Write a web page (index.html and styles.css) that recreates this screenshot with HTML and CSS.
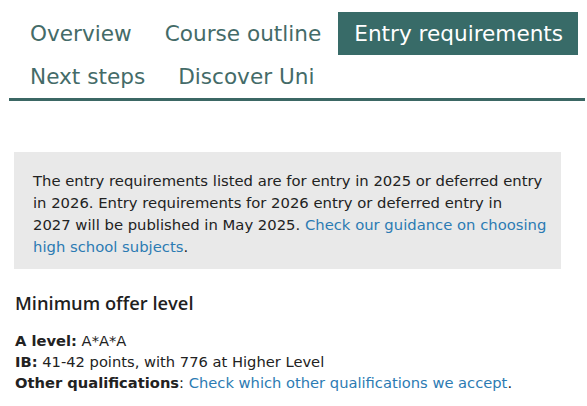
FILE: index.html
```html
<!DOCTYPE html>
<html lang="en">
<head>
<meta charset="utf-8">
<title>Entry requirements</title>
<link rel="stylesheet" href="styles.css">
</head>
<body>
<nav class="tabs">
  <ul class="tab-list">
    <li class="tab"><a href="#">Overview</a></li>
    <li class="tab"><a href="#">Course outline</a></li>
    <li class="tab tab-active"><a href="#">Entry requirements</a></li>
    <li class="tab"><a href="#">Next steps</a></li>
    <li class="tab"><a href="#">Discover Uni</a></li>
  </ul>
</nav>
<main class="content">
  <div class="notice">
    <p>The entry requirements listed are for entry in 2025 or deferred entry<br>in 2026. Entry requirements for 2026 entry or deferred entry in<br>2027 will be published in May 2025. <a href="#">Check our guidance on choosing<br>high school subjects</a>.</p>
  </div>
  <h2 class="offer-title">Minimum offer level</h2>
  <p class="offer">
    <strong>A level:</strong> A*A*A<br>
    <strong>IB:</strong> 41-42 points, with 776 at Higher Level<br>
    <strong>Other qualifications</strong>: <a href="#">Check which other qualifications we accept</a>.
  </p>
</main>
</body>
</html>
```

FILE: styles.css
```css
html, body {
  margin: 0;
  padding: 0;
  background: #ffffff;
}
body {
  font-family: "DejaVu Sans", Verdana, sans-serif;
  color: #222222;
}
a {
  color: #2c7bb3;
  text-decoration: none;
}
.tabs {
  margin: 12px 2px 0 9px;
  border-bottom: 3px solid #3b6764;
}
.tab-list {
  list-style: none;
  margin: 0;
  padding: 0 0 0 4px;
  display: flex;
  flex-wrap: wrap;
}
.tab a {
  display: block;
  padding: 0 16px 0 17px;
  height: 43px;
  line-height: 43px;
  font-size: 21.6px;
  color: #446b68;
}
.tab-active {
  margin-left: 1px;
}
.tab-active a {
  background: #386b68;
  color: #ffffff;
  padding: 0 15px 0 16px;
}
.content {
  padding: 51px 26px 0 14px;
}
.notice {
  background: #e9e9e9;
  padding: 18px 4px 11px 19px;
}
.notice p {
  margin: 0;
  font-size: 14.8px;
  line-height: 22px;
}
.offer-title {
  font-family: "Open Sans", sans-serif;
  font-weight: 600;
  font-size: 18.3px;
  line-height: 24px;
  margin: 22px 0 0 1px;
  color: #1f1f1f;
}
.offer {
  margin: 15px 0 0 1px;
  font-size: 14.7px;
  line-height: 21px;
}
.offer strong {
  font-weight: bold;
}
```
